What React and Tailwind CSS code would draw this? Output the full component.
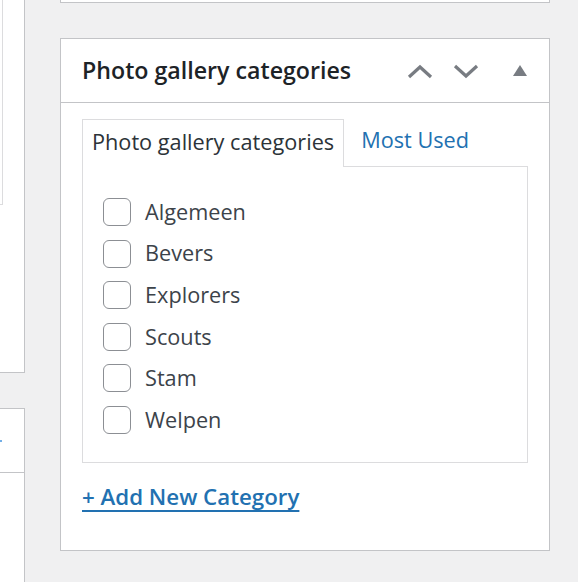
import React from 'react';

const items = ['Algemeen', 'Bevers', 'Explorers', 'Scouts', 'Stam', 'Welpen'];

export default function App() {
    return (
        <div className="w-[578px] h-[582px] overflow-hidden bg-[#f0f0f1] flex" style={{ fontFamily: '"Open Sans", "Noto Sans", sans-serif' }}>
            {/* Left column (cut off) */}
            <div className="w-[25px] shrink-0 flex flex-col">
                <div className="h-[373px] bg-white border-r border-b border-[#c3c4c7]">
                    <div className="w-[3px] h-[205px] border-r border-b border-[#dcdcde]" />
                </div>
                <div className="mt-[35px] flex-1 bg-white border-t border-r border-[#c3c4c7]">
                    <div className="h-[64px] border-b border-[#c3c4c7] flex items-center">
                        <span className="w-[2px] h-[2px] bg-[#72aee6]" />
                    </div>
                </div>
            </div>

            {/* Main column */}
            <div className="ml-[35px] w-[490px] shrink-0 flex flex-col">
                <div className="h-[3px] bg-white border-x border-b border-[#c3c4c7]" />

                <div className="mt-[35px] h-[513px] bg-white border border-[#c3c4c7] flex flex-col">
                    {/* Header */}
                    <div className="h-[64px] border-b border-[#c3c4c7] flex items-center justify-between pl-[21px] pr-[22px]">
                        <h2 className="text-[23.2px] font-semibold text-[#1d2327] leading-none mt-[1px]">Photo gallery categories</h2>
                        <div className="flex items-center text-[#787c82]">
                            <svg width="26" height="16" viewBox="0 0 26 16" className="mr-[20px]">
                                <path d="M2 14 L13 4 L24 14" fill="none" stroke="currentColor" strokeWidth="3.2" />
                            </svg>
                            <svg width="26" height="16" viewBox="0 0 26 16" className="mr-[34px]">
                                <path d="M2 3 L13 13 L24 3" fill="none" stroke="currentColor" strokeWidth="3.2" />
                            </svg>
                            <svg width="14" height="12" viewBox="0 0 14 12">
                                <path d="M7 0 L14 11 L0 11 Z" fill="currentColor" />
                            </svg>
                        </div>
                    </div>

                    {/* Body */}
                    <div className="px-[21px] pt-[15px]">
                        <div className="flex items-end">
                            <div className="h-[48px] px-[9px] pb-[3px] border border-b-0 border-[#dcdcde] bg-white -mb-px relative z-10 flex items-center text-[21.7px] text-[#2c3338]">
                                Photo gallery categories
                            </div>
                            <a className="ml-[17px] h-[48px] pb-[3px] flex items-center text-[21.7px] text-[#2271b1]">Most Used</a>
                        </div>
                        <div className="h-[297px] border border-[#dcdcde] pl-[20px] pt-[31px]">
                            <ul className="flex flex-col gap-[13.6px]">
                                {items.map((item) => (
                                    <li key={item} className="flex items-center h-[28px]">
                                        <span className="w-[28px] h-[28px] rounded-[6px] border-[1.5px] border-[#8c8f94] bg-white shrink-0" />
                                        <span className="ml-[14px] text-[21.7px] text-[#3c434a]">{item}</span>
                                    </li>
                                ))}
                            </ul>
                        </div>
                        <a className="inline-block mt-[17px] text-[22.3px] font-semibold text-[#2271b1] underline underline-offset-[5px] decoration-[2px]">+ Add New Category</a>
                    </div>
                </div>
            </div>
        </div>
    );
}
